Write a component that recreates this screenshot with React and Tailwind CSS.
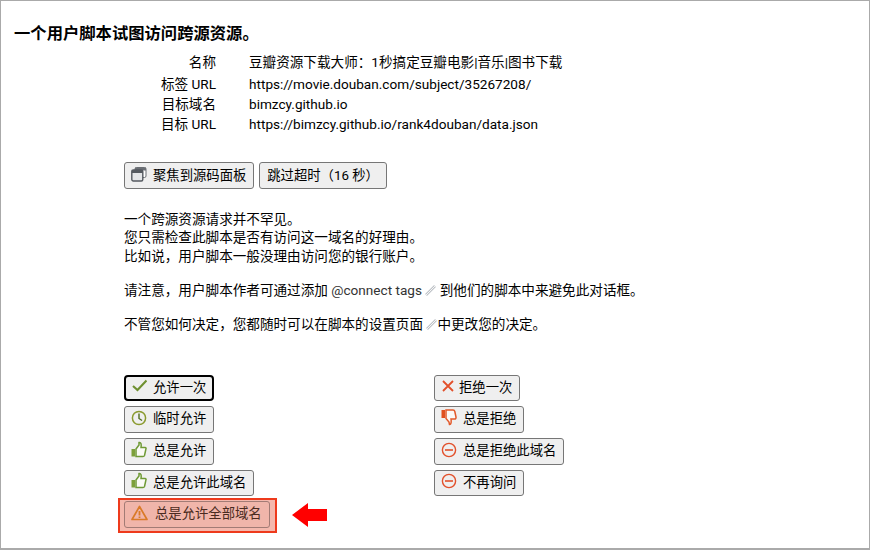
const plain = "h-[27px] pl-[6px] pr-[7px] bg-[#efefef] border border-[#767676] rounded-[3px] text-black";
const short = "h-[26px] pl-[6px] pr-[7px] bg-[#efefef] border border-[#767676] rounded-[3px] text-black";
const skip = "h-[27px] pl-[7px] pr-[7px] bg-[#efefef] border border-[#767676] rounded-[3px] text-black";
const focused = "h-[26px] pl-[5px] pr-[6px] bg-[#efefef] border-2 border-black rounded-[4px] text-black";
const danger = "h-[27px] pl-[6px] pr-[7px] bg-[#f0b5aa] border border-[#a27b75] rounded-[3px] text-[#4a2a20]";

const Btn = ({ icon, children, look = plain }) => (
  <button className={"flex items-center text-[13.33px] whitespace-nowrap " + look}>
    {icon}
    {children}
  </button>
);

const Check = () => (
  <svg width="16" height="16" viewBox="0 0 16 16" className="mr-[6px] -mt-[3px]">
    <path d="M2 8 L6.5 12 L15.5 2.5" fill="none" stroke="#6f9030" strokeWidth="2.1" />
  </svg>
);
const Clock = () => (
  <svg width="16" height="16" viewBox="0 0 16 16" className="mr-[6px] -mt-[3px]">
    <circle cx="8" cy="8" r="6.6" fill="none" stroke="#8a9a2e" strokeWidth="1.5" />
    <path d="M8 3.5 V8.5 L11 10.5" fill="none" stroke="#4f6b1e" strokeWidth="1.4" />
  </svg>
);
const ThumbUp = () => (
  <svg width="16" height="17" viewBox="0 0 16 17" className="mr-[6px] -mt-[4px]">
    <path d="M0.5 8 H4 V15.5 H0.5 Z" fill="#7da03a" />
    <path d="M5 8 L8 4 V1.5 C10 1 10.5 3 10 6.5 H14 C15 6.5 15.3 7.5 14.8 8.5 L13.5 14.5 C13.2 15.3 12.6 15.5 12 15.5 H5 Z" fill="#fbfbf6" stroke="#6f9a35" strokeWidth="1.5" />
  </svg>
);
const Cross = () => (
  <svg width="14" height="14" viewBox="0 0 14 14" className="mr-[4px] -mt-[3px]">
    <path d="M2 2 L12 12 M12 2 L2 12" stroke="#e2502b" strokeWidth="1.8" />
  </svg>
);
const ThumbDown = () => (
  <svg width="16" height="17" viewBox="0 0 16 17" className="mr-[6px] -mt-[3px]">
    <path d="M0.5 1 H4 V9 H0.5 Z" fill="#e0501f" />
    <path d="M5 1 H12 C13 1 13.6 1.5 13.8 2.5 L15 8 C15.2 9.2 14.6 10 13.5 10 H10 C10.5 13 10.2 15.6 8.5 15.5 L8 13 L5 9.5 Z" fill="#fbf8f6" stroke="#e2592b" strokeWidth="1.5" />
  </svg>
);
const Minus = () => (
  <svg width="16" height="16" viewBox="0 0 16 16" className="mr-[6px] -mt-[3px]">
    <circle cx="8" cy="8" r="6.6" fill="none" stroke="#e2502b" strokeWidth="1.4" />
    <path d="M4 8 H12" stroke="#e2502b" strokeWidth="1.6" />
  </svg>
);
const Warn = () => (
  <svg width="17" height="16" viewBox="0 0 17 16" className="mr-[7px] -mt-[3px]">
    <path d="M8.5 1.5 L16 14.5 H1 Z" fill="none" stroke="#d97a28" strokeWidth="1.7" strokeLinejoin="round" />
    <path d="M8.5 6 V10.5 M8.5 11.5 V13" stroke="#d97a28" strokeWidth="1.8" />
  </svg>
);
const Windows = () => (
  <svg width="16" height="15" viewBox="0 0 16 15" className="mr-[6px] -mt-[3px]">
    <rect x="4" y="0.5" width="11" height="10" rx="1.5" fill="#fff" stroke="#6b6f75" />
    <rect x="4" y="0.5" width="11" height="3" fill="#6b6f75" />
    <rect x="0.8" y="3" width="11" height="11" rx="1.5" fill="#e4e6e8" stroke="#555a60" strokeWidth="1.4" />
    <rect x="0.8" y="3" width="11" height="3" fill="#555a60" />
  </svg>
);
const Ext = () => (
  <svg width="11" height="11" viewBox="0 0 11 11" className="inline-block align-[-1px]">
    <path d="M1 10 L10 1" stroke="#bfc3c8" strokeWidth="2.6" />
    <path d="M1 10 L10 1" stroke="#f6f6f6" strokeWidth="1" />
  </svg>
);

const rows = [
  ["名称", "豆瓣资源下载大师：1秒搞定豆瓣电影|音乐|图书下载", "h-[22px]"],
  ["标签 URL", "https://movie.douban.com/subject/35267208/", "h-[20px]"],
  ["目标域名", "bimzcy.github.io", "h-[20px]"],
  ["目标 URL", "https://bimzcy.github.io/rank4douban/data.json", "h-[20px]"],
];

export default function App() {
  return (
    <div className="w-[870px] h-[550px] overflow-hidden bg-white text-black border-t border-l border-r border-b-2 border-[#aaaaaa] font-['Roboto','Noto_Sans_CJK_SC',sans-serif] text-[13.6px] leading-[20px]">
      <h1 className="ml-[13px] mt-[22px] text-[16.32px] leading-[22px] font-bold">一个用户脚本试图访问跨源资源。</h1>

      <div className="mt-[7px] flex flex-col">
        {rows.map((r) => (
          <div key={r[0]} className={"flex " + r[2]}>
            <div className="w-[215px] text-right">{r[0]}</div>
            <div className="ml-[33px]">{r[1]}</div>
          </div>
        ))}
      </div>

      <div className="mt-[28px] ml-[123px] flex gap-[5px]">
        <Btn icon={<Windows />}>聚焦到源码面板</Btn>
        <Btn look={skip}>跳过超时（16 秒）</Btn>
      </div>

      <div className="mt-[21px] ml-[123px] leading-[18.33px]">
        <p>一个跨源资源请求并不罕见。</p>
        <p>您只需检查此脚本是否有访问这一域名的好理由。</p>
        <p>比如说，用户脚本一般没理由访问您的银行账户。</p>
        <p className="mt-[16px]">
          请注意，用户脚本作者可通过添加 <span className="text-[#333]">@connect tags</span> <Ext /> 到他们的脚本中来避免此对话框。
        </p>
        <p className="mt-[16px]">
          不管您如何决定，您都随时可以在脚本的设置页面 <Ext />中更改您的决定。
        </p>
      </div>

      <div className="mt-[41.33px] ml-[123px] flex">
        <div className="w-[310px] flex flex-col gap-[5px] items-start">
          <Btn icon={<Check />} look={focused}>允许一次</Btn>
          <Btn icon={<Clock />}>临时允许</Btn>
          <Btn icon={<ThumbUp />}>总是允许</Btn>
          <Btn icon={<ThumbUp />} look={short}>总是允许此域名</Btn>
        </div>
        <div className="flex flex-col gap-[5px] items-start">
          <Btn icon={<Cross />} look={short}>拒绝一次</Btn>
          <Btn icon={<ThumbDown />}>总是拒绝</Btn>
          <Btn icon={<Minus />}>总是拒绝此域名</Btn>
          <Btn icon={<Minus />} look={short}>不再询问</Btn>
        </div>
      </div>

      <div className="ml-[117px] mt-[2px] flex items-center">
        <div className="pt-[1px] pb-[3px] pl-[4px] pr-[5px] border-2 border-[#ee3a1c] bg-[#f4b8ad]">
          <Btn icon={<Warn />} look={danger}>总是允许全部域名</Btn>
        </div>
        <svg width="35" height="24" viewBox="0 0 35 24" className="ml-[15px] -mt-[1px]">
          <path d="M0 12 L16 0 V6 H35 V18 H16 V24 Z" fill="#ff0000" />
        </svg>
      </div>
    </div>
  );
}
